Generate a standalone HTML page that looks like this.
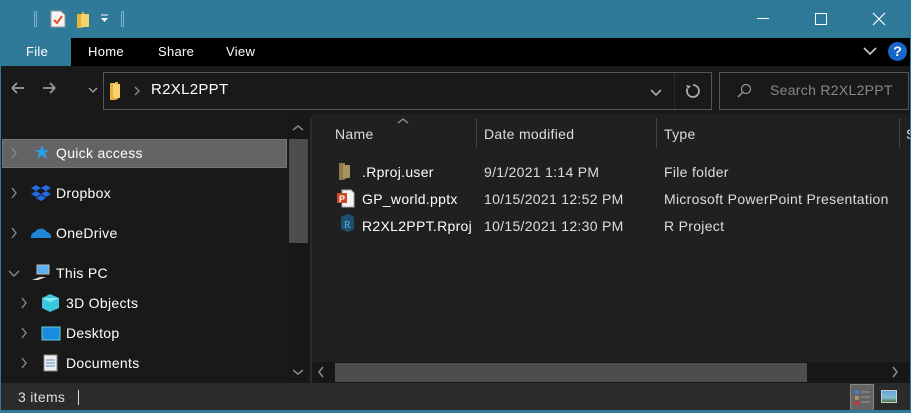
<!DOCTYPE html>
<html><head><meta charset="utf-8"><style>
*{margin:0;padding:0;box-sizing:border-box}
body{width:911px;height:413px;overflow:hidden;background:#191919;font-family:"Segoe UI","Liberation Sans",sans-serif;font-size:14px;color:#fff;position:relative}
.a{position:absolute}
.t{position:absolute;white-space:nowrap;letter-spacing:0.3px}
</style></head><body>
<!-- title bar -->
<div class="a" style="left:0;top:0;width:911px;height:38px;background:#2e7a98"></div>
<div class="a" style="left:34px;top:11px;width:3px;height:16px;border:1px solid #7fb0c4;border-radius:1px"></div>
<svg class="a" style="left:50px;top:10px" width="16" height="18"><path d="M1 1h10l4 4v12H1z" fill="#f4f4f4" stroke="#999"/><path d="M4 10l3 3 5-7" stroke="#e2502a" stroke-width="2" fill="none"/></svg>
<svg class="a" style="left:76px;top:11px" width="14" height="17"><path d="M1 3h5v-2h2v15l-3 1H1z" fill="#e6b23a"/><path d="M5 3h8v13H5z" fill="#f8d36b"/></svg>
<svg class="a" style="left:100px;top:14px" width="9" height="9"><path d="M1 1h7" stroke="#fff"/><path d="M1 4h7l-3.5 4z" fill="#fff"/></svg>
<div class="a" style="left:121px;top:11px;width:3px;height:16px;border:1px solid #7fb0c4;border-radius:1px"></div>
<div class="a" style="left:757px;top:18px;width:12px;height:1px;background:#fff"></div>
<div class="a" style="left:815px;top:13px;width:12px;height:12px;border:1px solid #fff"></div>
<svg class="a" style="left:872px;top:12px" width="14" height="14"><path d="M1 1L13 13M13 1L1 13" stroke="#fff" stroke-width="1.2"/></svg>
<!-- ribbon tabs -->
<div class="a" style="left:0;top:38px;width:911px;height:28px;background:#000"></div>
<div class="a" style="left:0;top:38px;width:71px;height:28px;background:#2e7a98"></div>
<div class="t" style="left:26px;top:44px;font-size:13px">File</div>
<div class="t" style="left:88px;top:44px;font-size:13px">Home</div>
<div class="t" style="left:158px;top:44px;font-size:13px">Share</div>
<div class="t" style="left:226px;top:44px;font-size:13px">View</div>
<svg class="a" style="left:863px;top:47px" width="14" height="9"><path d="M1 1l6 6 6-6" stroke="#ccc" stroke-width="1.6" fill="none"/></svg>
<div class="a" style="left:888px;top:42px;width:19px;height:19px;border-radius:50%;background:#1767c8;color:#fff;font-weight:bold;font-size:14px;text-align:center;line-height:19px">?</div>
<!-- address row -->
<div class="a" style="left:0;top:66px;width:911px;height:48px;background:#191919"></div>
<svg class="a" style="left:8px;top:79px" width="70" height="20"><path d="M4 9h12M4 9l5-5M4 9l5 5" stroke="#999" stroke-width="1.8" fill="none"/><path d="M35 9h12M47 9l-5-5M47 9l-5 5" stroke="#999" stroke-width="1.8" fill="none"/></svg>
<svg class="a" style="left:88px;top:87px" width="10" height="7"><path d="M1 1l4 4 4-4" stroke="#999" stroke-width="1.5" fill="none"/></svg>
<div class="a" style="left:103px;top:72px;width:608px;height:38px;border:1px solid #555;border-right:none"></div>
<div class="a" style="left:674px;top:73px;width:1px;height:36px;background:#2b2b2b"></div>
<div class="a" style="left:711px;top:72px;width:1px;height:38px;background:#555"></div>
<svg class="a" style="left:109px;top:81px" width="12" height="20"><path d="M1 2h5v-1h3v17l-3 1H1z" fill="#e6b23a"/><path d="M4 3h7v14H4z" fill="#f8d36b"/></svg>
<svg class="a" style="left:134px;top:86px" width="7" height="10"><path d="M1 1l4 4-4 4" stroke="#888" stroke-width="1.4" fill="none"/></svg>
<div class="t" style="left:151px;top:81px;font-size:15px">R2XL2PPT</div>
<svg class="a" style="left:650px;top:89px" width="12" height="8"><path d="M1 1l5 5 5-5" stroke="#aaa" stroke-width="1.6" fill="none"/></svg>
<svg class="a" style="left:685px;top:83px" width="16" height="16"><path d="M8 2a6 6 0 1 1-5.5 3.5" stroke="#aaa" stroke-width="1.8" fill="none"/><path d="M1 2l2 4 3-3z" fill="#aaa"/></svg>
<div class="a" style="left:719px;top:72px;width:190px;height:38px;border:1px solid #555"></div>
<svg class="a" style="left:736px;top:83px" width="16" height="16"><circle cx="10" cy="6" r="4.5" stroke="#999" stroke-width="1.2" fill="none"/><path d="M7 9l-5 5" stroke="#999" stroke-width="1.4"/></svg>
<div class="t" style="left:770px;top:82px;font-size:14px;color:#888">Search R2XL2PPT</div>
<!-- nav pane -->
<div class="a" style="left:0;top:114px;width:312px;height:269px;background:#191919"></div>
<div class="a" style="left:2px;top:139px;width:285px;height:29px;background:#646464;border:1px solid #777"></div>
<div class="a" style="left:288px;top:118px;width:20px;height:265px;background:#171717"></div>
<div class="a" style="left:289px;top:139px;width:19px;height:104px;background:#4d4d4d"></div>
<svg class="a" style="left:292px;top:124px" width="12" height="8"><path d="M1 6l5-4 5 4" stroke="#888" stroke-width="1.5" fill="none"/></svg>
<svg class="a" style="left:292px;top:369px" width="12" height="8"><path d="M1 1l5 4 5-4" stroke="#888" stroke-width="1.5" fill="none"/></svg>
<div class="a" style="left:310px;top:118px;width:2px;height:265px;background:#2b2b2b"></div>
<svg class="a" style="left:0;top:0" width="290" height="383">
<g stroke="#888" stroke-width="1.4" fill="none">
<path d="M12 148l4 5-4 5M12 188l4 5-4 5M12 228l4 5-4 5M9 271l5 5 5-5M22 298l4 5-4 5M22 328l4 5-4 5M22 358l4 5-4 5"/>
</g>
<path d="M42 145l2 5h5l-4 3 2 6-5-4-5 4 2-6-4-3h5z" fill="#2b9fe6"/>
<g fill="#2769e5"><path d="M31 188l5-3 5 3-5 3zM41 188l5-3 5 3-5 3zM31 194l5-3 5 3-5 3zM41 194l5-3 5 3-5 3zM36 198l5-3 5 3-5 3z"/></g>
<path d="M31 238a5 5 0 0 1 4-6a7 7 0 0 1 12 0a5 5 0 0 1 4 6z" fill="#1f86d8"/>
<rect x="37" y="265" width="12" height="9" fill="#5ab0f0" stroke="#bbb"/><path d="M32 280l8-3h6l-8 3z" fill="#ddd"/>
<path d="M42 298l8-4 9 4v10l-9 4-8-4z" fill="#3cc8dc"/><path d="M42 298l8 4 9-4" fill="#8eeaf2"/>
<rect x="42" y="327" width="18" height="13" fill="#1a8ce0" stroke="#6cc"/>
<rect x="44" y="355" width="13" height="16" fill="#eee" stroke="#888"/><path d="M46 360h9M46 363h9M46 366h9" stroke="#5a8acb"/>
</svg>
<div class="t" style="left:56px;top:145px">Quick access</div>
<div class="t" style="left:56px;top:185px">Dropbox</div>
<div class="t" style="left:56px;top:225px">OneDrive</div>
<div class="t" style="left:56px;top:265px">This PC</div>
<div class="t" style="left:66px;top:295px">3D Objects</div>
<div class="t" style="left:66px;top:325px">Desktop</div>
<div class="t" style="left:66px;top:355px">Documents</div>
<!-- content -->
<div class="a" style="left:312px;top:114px;width:597px;height:248px;background:#202020"></div>
<svg class="a" style="left:397px;top:117px" width="12" height="7"><path d="M1 6l5-4 5 4" stroke="#999" stroke-width="1.2" fill="none"/></svg>
<div class="a" style="left:476px;top:118px;width:1px;height:30px;background:#444"></div>
<div class="a" style="left:656px;top:118px;width:1px;height:30px;background:#444"></div>
<div class="a" style="left:899px;top:118px;width:1px;height:30px;background:#444"></div>
<div class="t" style="left:335px;top:126px;color:#ddd">Name</div>
<div class="t" style="left:484px;top:126px;color:#ddd">Date modified</div>
<div class="t" style="left:664px;top:126px;color:#ddd">Type</div>
<div class="t" style="left:906px;top:126px;color:#ddd">S</div>
<svg class="a" style="left:337px;top:161px" width="18" height="75">
<path d="M2 2h6v2h1v14l-3 1H2z" fill="#8c7a4a"/><path d="M6 4h7v13H6z" fill="#a89462"/>
<path d="M5 29h9l3 3v14H5z" fill="#f4f4f4" stroke="#aaa"/><rect x="0" y="32" width="10" height="10" fill="#d24726"/><text x="2" y="41" font-size="9" fill="#fff" font-family="Liberation Sans" font-weight="bold">P</text>
<path d="M4 56l7-3 6 3v12l-6 3-7-3z" fill="#1f4f6e"/><text x="7" y="67" font-size="10" fill="#5cb6e8" font-family="Liberation Serif">R</text>
</svg>
<div class="t" style="left:362px;top:164px">.Rproj.user</div>
<div class="t" style="left:362px;top:191px">GP_world.pptx</div>
<div class="t" style="left:362px;top:218px">R2XL2PPT.Rproj</div>
<div class="t" style="left:484px;top:164px;color:#ddd">9/1/2021 1:14 PM</div>
<div class="t" style="left:484px;top:191px;color:#ddd">10/15/2021 12:52 PM</div>
<div class="t" style="left:484px;top:218px;color:#ddd">10/15/2021 12:30 PM</div>
<div class="t" style="left:664px;top:164px;color:#ddd">File folder</div>
<div class="t" style="left:664px;top:191px;color:#ddd">Microsoft PowerPoint Presentation</div>
<div class="t" style="left:664px;top:218px;color:#ddd">R Project</div>
<!-- h scrollbar -->
<div class="a" style="left:312px;top:362px;width:597px;height:21px;background:#171717"></div>
<div class="a" style="left:335px;top:363px;width:472px;height:19px;background:#4d4d4d"></div>
<svg class="a" style="left:317px;top:366px" width="8" height="12"><path d="M6 1l-4 5 4 5" stroke="#888" stroke-width="1.6" fill="none"/></svg>
<svg class="a" style="left:810px;top:366px" width="90" height="12"><path d="M83 1l4 5-4 5" stroke="#888" stroke-width="1.6" fill="none"/></svg>
<!-- status -->
<div class="a" style="left:0;top:383px;width:911px;height:28px;background:#2b2b2b"></div>
<div class="t" style="left:18px;top:389px;font-size:14px;color:#ddd">3 items</div>
<div class="a" style="left:78px;top:390px;width:1px;height:15px;background:#ddd"></div>
<div class="a" style="left:850px;top:384px;width:24px;height:28px;background:#646464;border:1px solid #888"></div>
<svg class="a" style="left:855px;top:390px" width="16" height="16"><rect x="0" y="0" width="4" height="4" fill="#3d7fd0"/><rect x="0" y="6" width="4" height="4" fill="#a89462"/><rect x="0" y="11" width="4" height="4" fill="#c33"/><path d="M6 2h9M6 7h9M6 12h9" stroke="#999"/></svg>
<div class="a" style="left:881px;top:390px;width:16px;height:13px;background:linear-gradient(#5fa6e0,#8bc 60%,#474);border:1px solid #ccc"></div>
<!-- borders -->
<div class="a" style="left:0;top:410px;width:911px;height:3px;background:#2e7a98"></div>
<div class="a" style="left:0;top:38px;width:1px;height:375px;background:#2e7a98"></div>
<div class="a" style="left:910px;top:38px;width:1px;height:375px;background:#2e7a98"></div>
</body></html>
